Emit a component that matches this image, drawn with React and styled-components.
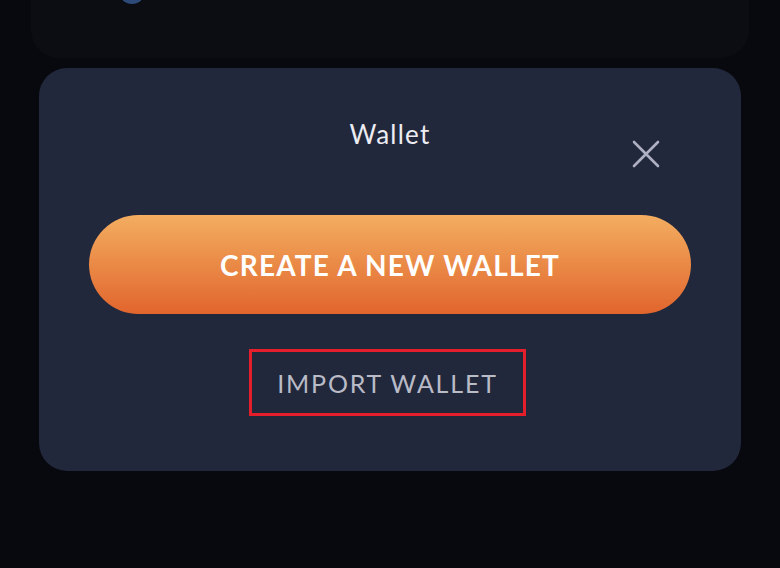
import React from "react";
import styled, { createGlobalStyle } from "styled-components";

const GlobalStyle = createGlobalStyle`
  html, body {
    margin: 0;
    padding: 0;
    background: #08090e;
    font-family: Lato, "Open Sans", sans-serif;
  }
`;

const Page = styled.div`
  width: 780px;
  height: 568px;
  overflow: hidden;
  display: flex;
  flex-direction: column;
`;

const TopCard = styled.div`
  position: relative;
  height: 58px;
  margin: 0 31px;
  background: #0c0d13;
  border-radius: 0 0 28px 28px;
`;

const Avatar = styled.div`
  position: absolute;
  left: 88px;
  top: -22px;
  width: 26px;
  height: 26px;
  border-radius: 50%;
  background: #2e4a78;
`;

const Modal = styled.div`
  margin: 10px 39px 0;
  padding: 51px 50px 55px;
  background: #22283c;
  border-radius: 28px;
  display: flex;
  flex-direction: column;
  align-items: center;
`;

const Header = styled.div`
  width: 100%;
  display: grid;
  grid-template-columns: 1fr auto 1fr;
`;

const Title = styled.h2`
  grid-column: 2;
  margin: 0;
  font-size: 26px;
  line-height: 30px;
  font-weight: 400;
  letter-spacing: 1.2px;
  color: #ececf2;
`;

const Close = styled.button`
  grid-column: 3;
  justify-self: end;
  align-self: start;
  margin: 21px 31px 0 0;
  width: 28px;
  height: 28px;
  padding: 0;
  border: 0;
  background: none;
  display: flex;
`;

const PrimaryButton = styled.button`
  margin-top: 47px;
  width: 100%;
  height: 99px;
  border: 0;
  border-radius: 50px;
  background: linear-gradient(180deg, #f3ae60 0%, #e1652d 100%);
  color: #ffffff;
  font-family: Lato, "Open Sans", sans-serif;
  font-size: 28px;
  font-weight: 700;
  letter-spacing: 1.2px;
`;

const ImportButton = styled.button`
  margin: 35px 5px 0 0;
  width: 277px;
  height: 67px;
  border: 3px solid #e41e2b;
  background: none;
  color: #b9bbc7;
  font-family: Lato, "Open Sans", sans-serif;
  font-size: 25px;
  font-weight: 400;
  letter-spacing: 1.8px;
`;

export default function App() {
  return (
    <Page>
      <GlobalStyle />
      <TopCard>
        <Avatar />
      </TopCard>
      <Modal>
        <Header>
          <Title>Wallet</Title>
          <Close aria-label="close">
            <svg width="28" height="28" viewBox="0 0 28 28">
              <path d="M2 2 L26 26 M26 2 L2 26" stroke="#aeb0c2" strokeWidth="2.6" strokeLinecap="round" />
            </svg>
          </Close>
        </Header>
        <PrimaryButton>CREATE A NEW WALLET</PrimaryButton>
        <ImportButton>IMPORT WALLET</ImportButton>
      </Modal>
    </Page>
  );
}
